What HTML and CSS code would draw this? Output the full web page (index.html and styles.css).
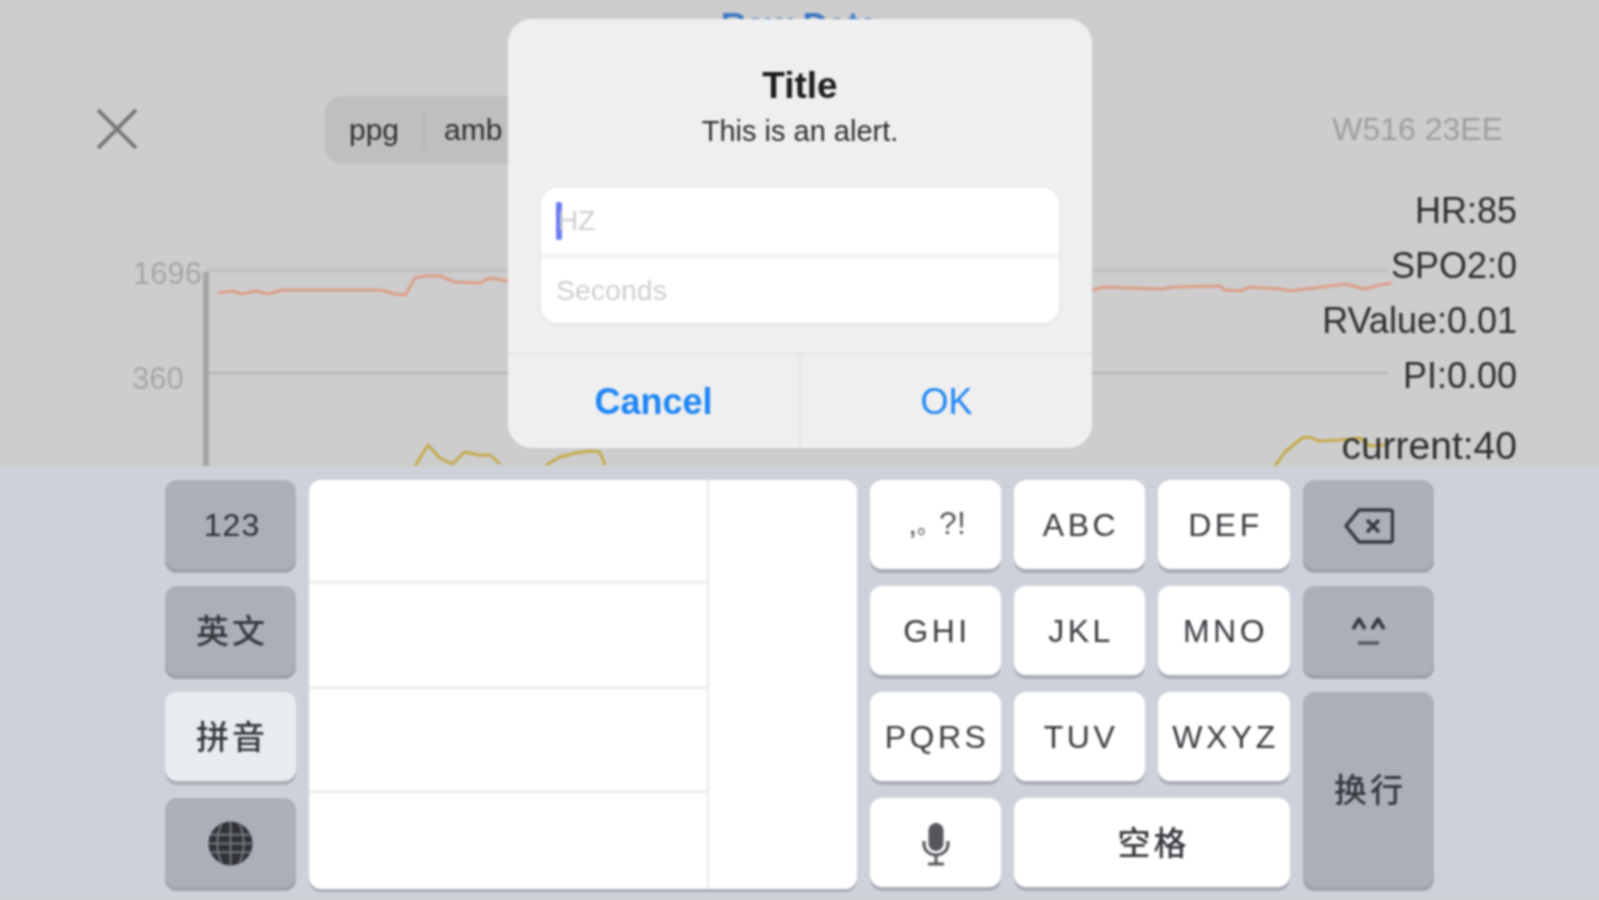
FILE: index.html
```html
<!DOCTYPE html>
<html lang="zh">
<head>
<meta charset="utf-8">
<title>Raw Data</title>
<link rel="stylesheet" href="styles.css">
</head>
<body>
<div class="app">
  <section class="stage">
    <svg class="chart" viewBox="0 0 1599 466" width="1599" height="466" aria-hidden="true">
      <path class="grid-top" d="M206 270H1388"/>
      <path class="grid-mid" d="M206 373H1388"/>
      <path class="axis" d="M206 272V466"/>
      <polyline class="line-orange" points="218,293 232,291 242,294 255,291 268,294 282,290 380,290 395,294 405,295 415,278 425,276 440,276 455,282 480,283 490,278 508,281"/>
      <polyline class="line-orange" points="1092,290 1105,287 1130,288 1160,289 1175,287 1220,286 1225,290 1240,291 1250,287 1280,289 1290,291 1330,286 1345,284 1365,289 1380,285 1392,283"/>
      <polyline class="line-yellow" points="415,466 428,445 440,458 452,464 465,452 478,455 490,455 500,464"/>
      <polyline class="line-yellow" points="546,465 560,457 576,453 590,451 600,452 605,465"/>
      <polyline class="line-yellow" points="1275,466 1285,452 1302,438 1310,437 1318,441 1340,440 1360,438 1370,446 1385,445"/>
      <text class="tick" x="133" y="284">1696</text>
      <text class="tick" x="132" y="389">360</text>
    </svg>
    <h1 class="page-title">Raw Data</h1>
    <div class="nav">
      <svg class="close" viewBox="0 0 40 40" width="40" height="40" aria-hidden="true"><path d="M1 1L39 39M39 1L1 39"/></svg>
      <div class="segment">
        <span class="seg-item seg-first">ppg</span>
        <span class="seg-item">amb</span>
      </div>
      <span class="device">W516 23EE</span>
    </div>
    <div class="stats">
      <div>HR:85</div>
      <div>SPO2:0</div>
      <div>RValue:0.01</div>
      <div>PI:0.00</div>
      <div class="stat-current">current:40</div>
    </div>
    <div class="alert">
      <div class="alert-title">Title</div>
      <div class="alert-msg">This is an alert.</div>
      <div class="fields">
        <div class="field field-first"><span class="caret"></span><span class="ph ph-hz">HZ</span></div>
        <div class="field"><span class="ph">Seconds</span></div>
      </div>
      <div class="actions">
        <div class="action action-cancel">Cancel</div>
        <div class="action">OK</div>
      </div>
    </div>
  </section>
  <section class="keyboard">
    <div class="key key-grey num">123</div>
    <div class="candidates">
      <div class="cand"></div><div class="cand cand-side"></div>
      <div class="cand"></div><div class="cand cand-side"></div>
      <div class="cand"></div><div class="cand cand-side"></div>
      <div class="cand cand-last"></div><div class="cand cand-side cand-last"></div>
    </div>
    <div class="key key-white punct">,<span class="punct-dot">。</span>?!</div>
    <div class="key key-white">ABC</div>
    <div class="key key-white">DEF</div>
    <div class="key key-grey">
      <svg viewBox="0 0 50 36" width="50" height="36" aria-hidden="true"><path class="stroke" d="M15 2H46A2.5 2.5 0 0 1 48.500 4.500V31.500A2.500 2.500 0 0 1 46 34H15L2 18Z"/><path class="stroke" d="M23 12L35 24M35 12L23 24"/></svg>
    </div>
    <div class="key key-grey cjk">英文</div>
    <div class="key key-white">GHI</div>
    <div class="key key-white">JKL</div>
    <div class="key key-white">MNO</div>
    <div class="key key-grey">
      <svg viewBox="0 0 40 32" width="40" height="32" aria-hidden="true"><path class="stroke" d="M4 13L10 3L16 13M23 13L29 3L35 13"/><path class="stroke thick" d="M9 27H30"/></svg>
    </div>
    <div class="key key-light cjk">拼音</div>
    <div class="key key-white">PQRS</div>
    <div class="key key-white">TUV</div>
    <div class="key key-white">WXYZ</div>
    <div class="key key-grey cjk key-return">换行</div>
    <div class="key key-grey">
      <svg viewBox="0 0 46 46" width="45" height="45" aria-hidden="true">
        <circle class="globe" cx="23" cy="23" r="22.500"/>
        <path class="globe-lines" d="M3 14H43M1 23H45M3 32H43M23 1V45M14 3C8 15 8 31 14 43M32 3C38 15 38 31 32 43"/>
      </svg>
    </div>
    <div class="key key-white">
      <svg viewBox="0 0 30 44" width="30" height="44" aria-hidden="true">
        <rect class="mic" x="7.500" y="1" width="15" height="28" rx="7.500"/>
        <path class="mic-line" d="M3 19V22C3 28 8 33 15 33C22 33 27 28 27 22V19M15 33V42M7 42H23"/>
      </svg>
    </div>
    <div class="key key-white cjk key-space">空格</div>
  </section>
</div>
</body>
</html>
```
FILE: styles.css
```css
* { box-sizing: border-box; }
html, body { margin: 0; padding: 0; width: 1599px; height: 900px; overflow: hidden; background: #cdcdcd; }
body { font-family: "Liberation Sans", Arial, "Noto Sans CJK SC", sans-serif; }
.app { width: 1599px; height: 900px; display: flex; flex-direction: column; filter: blur(0.9px); }

.stage { position: relative; height: 466px; background: #cdcdcd; flex: none; }
.chart { position: absolute; left: 0; top: 0; }
.grid-top { stroke: #c4c4c4; stroke-width: 5; fill: none; }
.grid-mid { stroke: #b7b7b7; stroke-width: 2.500; fill: none; }
.axis { stroke: #a6a6a6; stroke-width: 6; fill: none; }
.line-orange { stroke: #dc9f88; stroke-width: 3; fill: none; stroke-linejoin: round; }
.line-yellow { stroke: #c5ab4e; stroke-width: 3; fill: none; stroke-linejoin: round; }
.tick { fill: #a6a6a6; font-size: 31px; font-family: "Liberation Sans", Arial, sans-serif; }

.page-title { position: relative; margin: 0; height: 95px; padding-top: 2px; text-align: center; font-size: 35px; line-height: 46px; font-weight: 700; color: #3e7ac2; }
.nav { position: relative; display: flex; align-items: center; height: 68px; padding: 0 96px 0 97px; }
.close { flex: none; margin-right: 188px; }
.close path { stroke: #787878; stroke-width: 4; fill: none; }
.segment { display: flex; align-items: center; width: 640px; height: 68px; margin-top: 2px; margin-right: auto; background: #bfbfbf; border-radius: 17px; }
.seg-item { display: flex; align-items: center; justify-content: center; font-size: 30px; color: #2e2e2e; padding: 0 19px; height: 38px; }
.seg-first { width: 100px; padding: 0; border-right: 2px solid #b5b5b5; }
.device { font-size: 32px; color: #9e9e9e; }

.stats { position: absolute; right: 82px; top: 183px; text-align: right; font-size: 36px; line-height: 55px; color: #2e2e2e; }
.stat-current { margin-top: 15px; font-size: 39px; }

.alert { position: absolute; left: 508px; top: 19px; width: 584px; height: 429px; background: #efefef; border-radius: 24px; padding-top: 46px; text-align: center; overflow: hidden; }
.alert-title { font-size: 37px; line-height: 42px; font-weight: 700; color: #1c1c1c; }
.alert-msg { margin-top: 7px; font-size: 29px; line-height: 34px; color: #2d2d2d; }
.fields { margin: 40px 33px 0; height: 135px; background: #fff; border-radius: 16px; box-shadow: 0 1px 6px rgba(0, 0, 0, .06); text-align: left; overflow: hidden; }
.field { display: flex; align-items: center; height: 65px; padding-left: 15px; }
.field-first { height: 70px; border-bottom: 5px solid #f4f4f4; }
.caret { width: 6px; height: 38px; background: #6a7cf2; border-radius: 2px; flex: none; }
.ph { font-size: 28.500px; color: #cfcfcf; }
.ph-hz { font-size: 28px; margin-left: -4px; }
.actions { display: flex; margin-top: 30px; height: 96px; border-top: 2px solid #e4e4e4; }
.action { flex: 1; display: flex; align-items: center; justify-content: center; font-size: 36px; color: #1f87f5; }
.action-cancel { font-weight: 700; border-right: 2px solid #e4e4e4; }

.keyboard { flex: 1; display: grid; grid-template-columns: 131px 548px 131px 131px 132px 131px; grid-auto-rows: 93px; gap: 13px; align-content: start; padding: 14px 0 0 165px; background: #cdd1d9; }
.key { display: flex; align-items: center; justify-content: center; padding: 0 0 2px 3px; border-radius: 12px; font-size: 32px; letter-spacing: 3.500px; color: #36383c; }
.key svg { flex: none; margin-left: -3px; }
.key-white { background: #fff; box-shadow: inset 0 -4px 0 #a9adb6; }
.key-grey { background: #abafba; box-shadow: inset 0 -4px 0 #9ea2ad; }
.key-light { background: #e9ecef; box-shadow: inset 0 -4px 0 #a9adb6; }
.num { letter-spacing: 1px; color: #2f3033; }
.punct { color: #55575b; letter-spacing: 0; padding-bottom: 6px; padding-left: 3px; }
.punct-dot { font-size: 22px; line-height: 1; align-self: flex-end; margin-bottom: 30px; }
.cjk { font-family: "Noto Sans CJK SC", sans-serif; font-size: 33px; font-weight: 500; letter-spacing: 3px; padding: 0 0 8px 3px; }
.candidates { grid-row: span 4; display: grid; grid-template-columns: 400px 148px; grid-template-rows: 104px 105px 104px 1fr; background: #fff; border-radius: 12px; box-shadow: 0 3px 0 #a9adb6; overflow: hidden; height: 409px; }
.cand { border-bottom: 3px solid #eaecee; border-right: 2px solid #e6e8eb; }
.cand-side { border-right: 0; border-bottom: 0; }
.cand-last { border-bottom: 0; }
.key-return { grid-row: span 2; }
.key-space { grid-column: span 2; }
.stroke { fill: none; stroke: #36383d; stroke-width: 3.500; stroke-linejoin: round; }
.thick { stroke-width: 3.500; stroke: #55575c; }
.globe { fill: #303236; }
.globe-lines { fill: none; stroke: #767982; stroke-width: 2; }
.mic { fill: #55575b; }
.mic-line { fill: none; stroke: #55575b; stroke-width: 3; }
```
